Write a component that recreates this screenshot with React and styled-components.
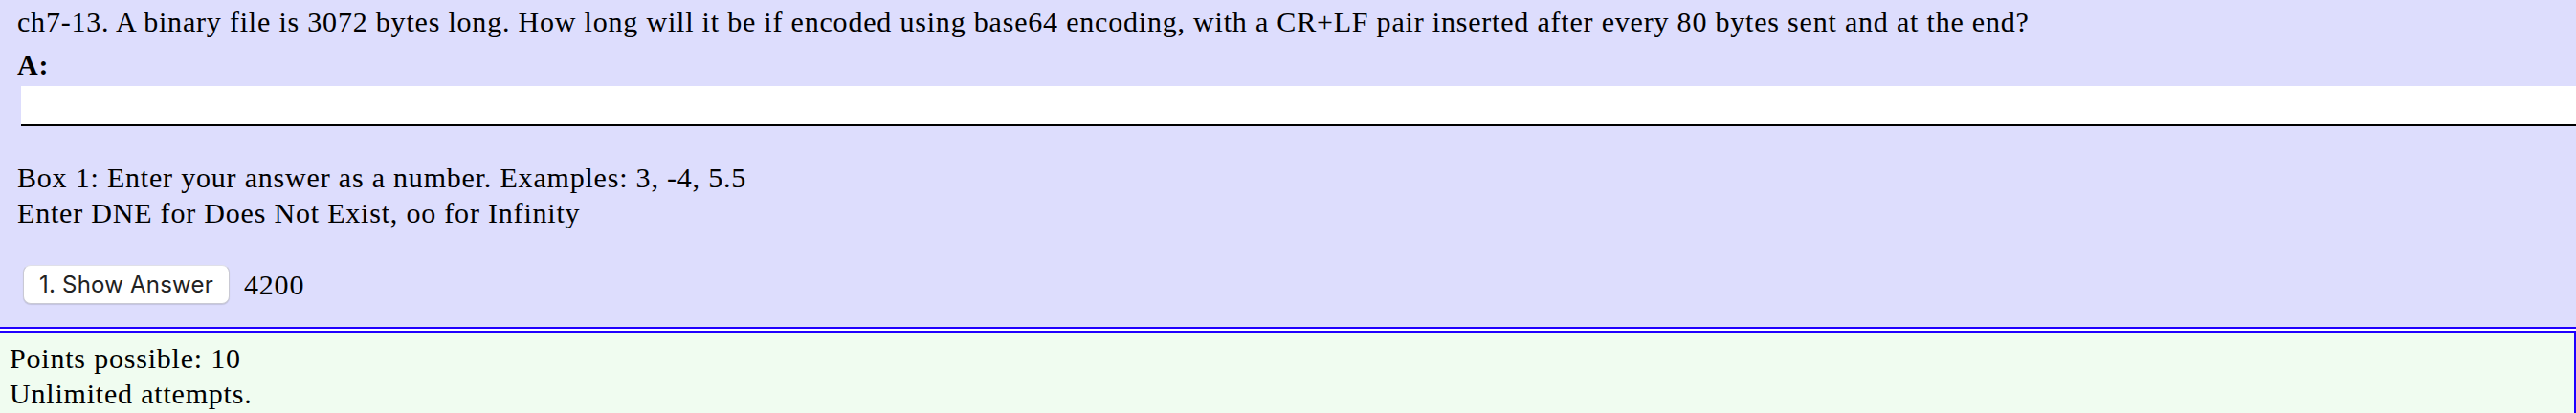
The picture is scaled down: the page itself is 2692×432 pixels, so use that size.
import React from "react";
import styled, { createGlobalStyle } from "styled-components";

const Global = createGlobalStyle`
  html, body { margin: 0; padding: 0; background: #ffffff; }
  body {
    font-family: "Liberation Serif", "Times New Roman", serif;
    font-size: 30px;
    letter-spacing: 0.8px;
    color: #000;
    overflow: hidden;
  }
`;

const Page = styled.div`
  display: flex;
  flex-direction: column;
  gap: 2px;
  width: 2692px;
`;

const QuestionBox = styled.div`
  background: #ddddfd;
  border-bottom: 2px solid #2000ff;
  padding: 4px 0 24px 18px;
  overflow: hidden;
  display: flex;
  flex-direction: column;
`;

const Line = styled.div`
  line-height: 37px;
  white-space: nowrap;
  margin-top: ${(p) => p.$mt || 0}px;
`;

const Label = styled.div`
  font-weight: bold;
  line-height: 37px;
  margin-top: 8px;
`;

const AnswerInput = styled.input`
  display: block;
  box-sizing: border-box;
  width: calc(100% + 40px);
  height: 42px;
  margin: 4px 0 0 4px;
  padding: 0 6px;
  border: none;
  border-bottom: 2px solid #000;
  background: #fff;
  font: inherit;
  outline: none;
`;

const AnswerRow = styled.div`
  display: flex;
  align-items: center;
  gap: 15px;
  margin: 36px 0 0 6px;
`;

const Button = styled.button`
  box-sizing: border-box;
  height: 41px;
  width: 216px;
  padding: 0;
  border: 1px solid #c9c9d4;
  border-top-color: #e0e0e8;
  border-radius: 8px;
  background: #fff;
  box-shadow: 0 1px 1px rgba(0, 0, 0, 0.12);
  font-family: Inter, "Liberation Sans", sans-serif;
  font-size: 24px;
  letter-spacing: 0.2px;
  color: #222;
`;

const AnswerValue = styled.span`
  line-height: 37px;
`;

const InfoBox = styled.div`
  background: #f0fcf0;
  border: 2px solid #2000ff;
  border-left: none;
  padding: 8px 0 10px 10px;
  display: flex;
  flex-direction: column;
`;

export default function App() {
  return (
    <>
      <Global />
      <Page>
        <QuestionBox>
          <Line>
            ch7-13. A binary file is 3072 bytes long. How long will it be if encoded using base64 encoding, with a CR+LF pair inserted after every 80 bytes sent and at the end?
          </Line>
          <Label>A:</Label>
          <AnswerInput type="text" aria-label="Answer" />
          <Line $mt={35}>Box 1: Enter your answer as a number. Examples: 3, -4, 5.5</Line>
          <Line>Enter DNE for Does Not Exist, oo for Infinity</Line>
          <AnswerRow>
            <Button type="button">1. Show Answer</Button>
            <AnswerValue>4200</AnswerValue>
          </AnswerRow>
        </QuestionBox>
        <InfoBox>
          <Line>Points possible: 10</Line>
          <Line>Unlimited attempts.</Line>
        </InfoBox>
      </Page>
    </>
  );
}
